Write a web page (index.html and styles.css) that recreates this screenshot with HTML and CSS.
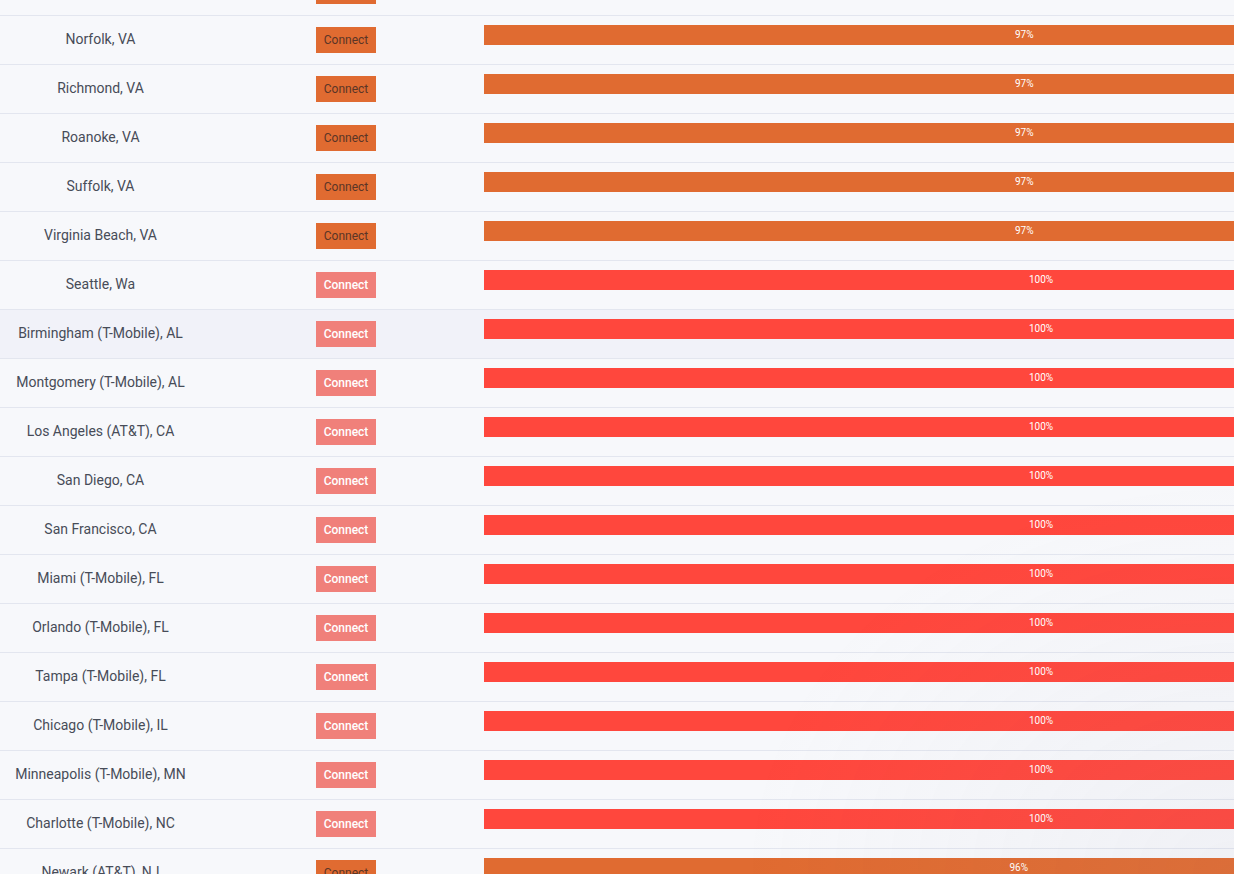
FILE: index.html
```html
<!DOCTYPE html>
<html lang="en">
<head>
<meta charset="utf-8">
<title>Servers</title>
<link rel="stylesheet" href="styles.css">
</head>
<body>
<div class="table">
  <div class="row"><div class="city">Newport News, VA</div><div class="act"><button class="btn btn-orange">Connect</button></div><div class="load"><div class="bar bar-orange" style="width:97%">97%</div></div></div>
  <div class="row"><div class="city">Norfolk, VA</div><div class="act"><button class="btn btn-orange">Connect</button></div><div class="load"><div class="bar bar-orange" style="width:97%">97%</div></div></div>
  <div class="row"><div class="city">Richmond, VA</div><div class="act"><button class="btn btn-orange">Connect</button></div><div class="load"><div class="bar bar-orange" style="width:97%">97%</div></div></div>
  <div class="row"><div class="city">Roanoke, VA</div><div class="act"><button class="btn btn-orange">Connect</button></div><div class="load"><div class="bar bar-orange" style="width:97%">97%</div></div></div>
  <div class="row"><div class="city">Suffolk, VA</div><div class="act"><button class="btn btn-orange">Connect</button></div><div class="load"><div class="bar bar-orange" style="width:97%">97%</div></div></div>
  <div class="row"><div class="city">Virginia Beach, VA</div><div class="act"><button class="btn btn-orange">Connect</button></div><div class="load"><div class="bar bar-orange" style="width:97%">97%</div></div></div>
  <div class="row"><div class="city">Seattle, Wa</div><div class="act"><button class="btn btn-pink">Connect</button></div><div class="load"><div class="bar bar-red" style="width:100%">100%</div></div></div>
  <div class="row row-hover"><div class="city">Birmingham (T-Mobile), AL</div><div class="act"><button class="btn btn-pink">Connect</button></div><div class="load"><div class="bar bar-red" style="width:100%">100%</div></div></div>
  <div class="row"><div class="city">Montgomery (T-Mobile), AL</div><div class="act"><button class="btn btn-pink">Connect</button></div><div class="load"><div class="bar bar-red" style="width:100%">100%</div></div></div>
  <div class="row"><div class="city">Los Angeles (AT&amp;T), CA</div><div class="act"><button class="btn btn-pink">Connect</button></div><div class="load"><div class="bar bar-red" style="width:100%">100%</div></div></div>
  <div class="row"><div class="city">San Diego, CA</div><div class="act"><button class="btn btn-pink">Connect</button></div><div class="load"><div class="bar bar-red" style="width:100%">100%</div></div></div>
  <div class="row"><div class="city">San Francisco, CA</div><div class="act"><button class="btn btn-pink">Connect</button></div><div class="load"><div class="bar bar-red" style="width:100%">100%</div></div></div>
  <div class="row"><div class="city">Miami (T-Mobile), FL</div><div class="act"><button class="btn btn-pink">Connect</button></div><div class="load"><div class="bar bar-red" style="width:100%">100%</div></div></div>
  <div class="row"><div class="city">Orlando (T-Mobile), FL</div><div class="act"><button class="btn btn-pink">Connect</button></div><div class="load"><div class="bar bar-red" style="width:100%">100%</div></div></div>
  <div class="row"><div class="city">Tampa (T-Mobile), FL</div><div class="act"><button class="btn btn-pink">Connect</button></div><div class="load"><div class="bar bar-red" style="width:100%">100%</div></div></div>
  <div class="row"><div class="city">Chicago (T-Mobile), IL</div><div class="act"><button class="btn btn-pink">Connect</button></div><div class="load"><div class="bar bar-red" style="width:100%">100%</div></div></div>
  <div class="row"><div class="city">Minneapolis (T-Mobile), MN</div><div class="act"><button class="btn btn-pink">Connect</button></div><div class="load"><div class="bar bar-red" style="width:100%">100%</div></div></div>
  <div class="row"><div class="city">Charlotte (T-Mobile), NC</div><div class="act"><button class="btn btn-pink">Connect</button></div><div class="load"><div class="bar bar-red" style="width:100%">100%</div></div></div>
  <div class="row"><div class="city">Newark (AT&amp;T), NJ</div><div class="act"><button class="btn btn-orange">Connect</button></div><div class="load"><div class="bar bar-orange" style="width:96%">96%</div></div></div>
</div>
<div class="shade"></div>
</body>
</html>
```
FILE: styles.css
```css
html, body {
  margin: 0;
  padding: 0;
  overflow: hidden;
  background: #f7f8fb;
  font-family: Roboto, "Liberation Sans", sans-serif;
}

.table {
  margin-top: -33px;
  width: 1598px;
}

.row {
  display: grid;
  grid-template-columns: 201px 283px 1114px;
  height: 48px;
  border-bottom: 1px solid #e3e6ef;
  background: #f7f8fb;
}

.row-hover {
  background: #f1f2f9;
}

.city {
  display: flex;
  align-items: center;
  justify-content: center;
  padding-bottom: 2px;
  font-size: 14px;
  color: #474c58;
  white-space: nowrap;
}

.act {
  display: flex;
  align-items: center;
  padding-left: 115px;
}

.btn {
  width: 60px;
  height: 26px;
  border: 0;
  padding: 0;
  font-family: Roboto, "Liberation Sans", sans-serif;
  font-size: 12px;
  cursor: pointer;
}

.btn-orange {
  background: #e06b31;
  color: #5b3526;
}

.btn-pink {
  background: #f0807a;
  color: #ffffff;
  font-weight: 500;
}

.load {
  padding-top: 9px;
}

.bar {
  height: 20px;
  line-height: 19px;
  text-align: center;
  font-size: 10px;
  color: #ffffff;
}

.bar-orange {
  background: #e06b31;
}

.bar-red {
  background: #ff473d;
}

.shade {
  position: fixed;
  right: 0;
  bottom: 0;
  width: 500px;
  height: 400px;
  pointer-events: none;
  background: radial-gradient(ellipse at 100% 100%, rgba(150, 150, 175, 0.07) 0%, rgba(150, 150, 175, 0) 70%);
}
```
